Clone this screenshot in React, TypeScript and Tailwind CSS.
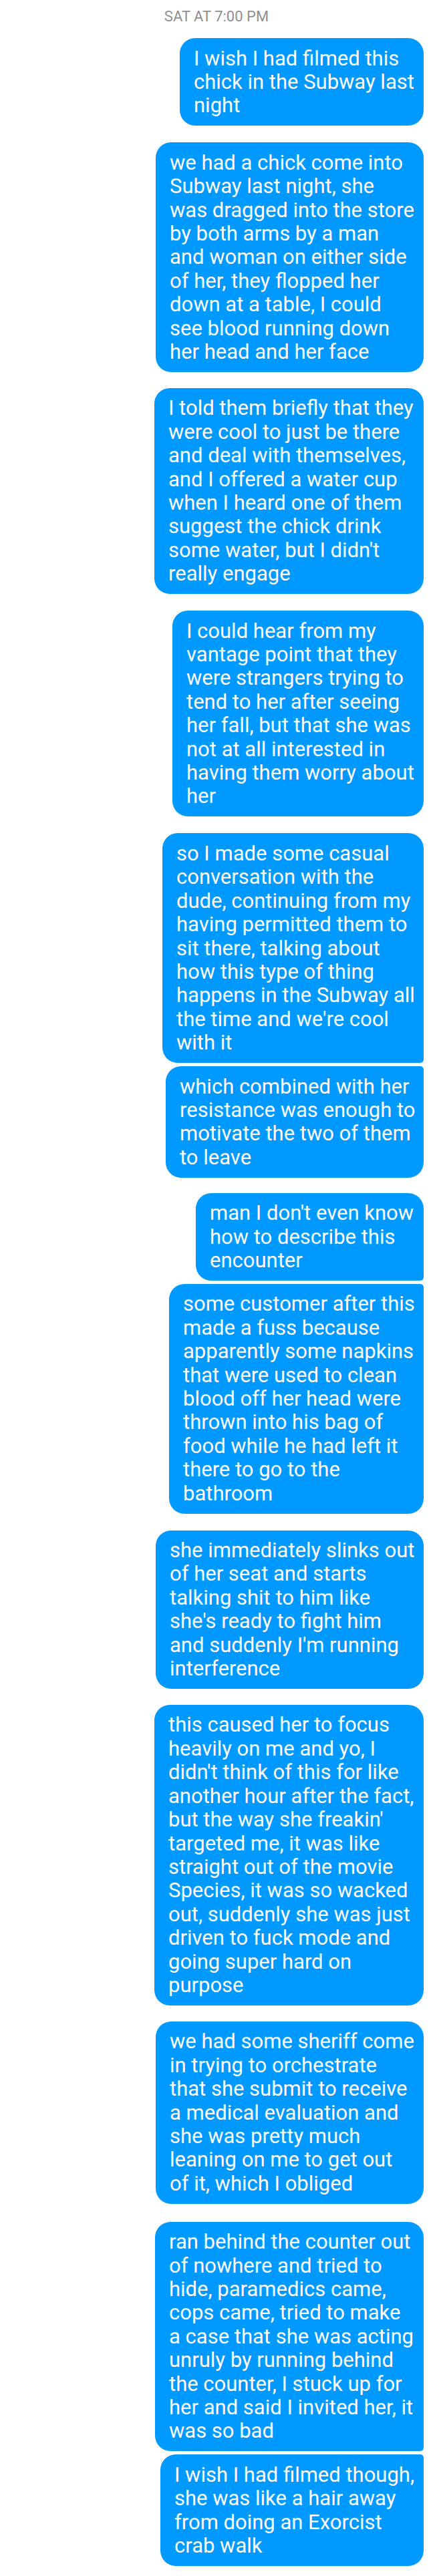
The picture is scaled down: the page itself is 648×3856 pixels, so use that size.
type Bubble = {
  lines: string[]
  width: number
  gap: number
  joinTop?: boolean
  joinBottom?: boolean
}

const bubbles: Bubble[] = [
  { width: 365, gap: 19, lines: ['I wish I had filmed this', 'chick in the Subway last', 'night'] },
  {
    width: 401,
    gap: 25,
    lines: [
      'we had a chick come into',
      'Subway last night, she',
      'was dragged into the store',
      'by both arms by a man',
      'and woman on either side',
      'of her, they flopped her',
      'down at a table, I could',
      'see blood running down',
      'her head and her face',
    ],
  },
  {
    width: 403,
    gap: 24,
    lines: [
      'I told them briefly that they',
      'were cool to just be there',
      'and deal with themselves,',
      'and I offered a water cup',
      'when I heard one of them',
      'suggest the chick drink',
      "some water, but I didn't",
      'really engage',
    ],
  },
  {
    width: 376,
    gap: 25,
    lines: [
      'I could hear from my',
      'vantage point that they',
      'were strangers trying to',
      'tend to her after seeing',
      'her fall, but that she was',
      'not at all interested in',
      'having them worry about',
      'her',
    ],
  },
  {
    width: 391,
    gap: 25,
    joinBottom: true,
    lines: [
      'so I made some casual',
      'conversation with the',
      'dude, continuing from my',
      'having permitted them to',
      'sit there, talking about',
      'how this type of thing',
      'happens in the Subway all',
      "the time and we're cool",
      'with it',
    ],
  },
  {
    width: 386,
    gap: 5,
    joinTop: true,
    lines: ['which combined with her', 'resistance was enough to', 'motivate the two of them', 'to leave'],
  },
  {
    width: 341,
    gap: 23,
    joinBottom: true,
    lines: ["man I don't even know", 'how to describe this', 'encounter'],
  },
  {
    width: 381,
    gap: 5,
    joinTop: true,
    lines: [
      'some customer after this',
      'made a fuss because',
      'apparently some napkins',
      'that were used to clean',
      'blood off her head were',
      'thrown into his bag of',
      'food while he had left it',
      'there to go to the',
      'bathroom',
    ],
  },
  {
    width: 401,
    gap: 25,
    lines: [
      'she immediately slinks out',
      'of her seat and starts',
      'talking shit to him like',
      "she's ready to fight him",
      "and suddenly I'm running",
      'interference',
    ],
  },
  {
    width: 403,
    gap: 24,
    lines: [
      'this caused her to focus',
      'heavily on me and yo, I',
      "didn't think of this for like",
      'another hour after the fact,',
      "but the way she freakin'",
      'targeted me, it was like',
      'straight out of the movie',
      'Species, it was so wacked',
      'out, suddenly she was just',
      'driven to fuck mode and',
      'going super hard on',
      'purpose',
    ],
  },
  {
    width: 401,
    gap: 24,
    lines: [
      'we had some sheriff come',
      'in trying to orchestrate',
      'that she submit to receive',
      'a medical evaluation and',
      'she was pretty much',
      'leaning on me to get out',
      'of it, which I obliged',
    ],
  },
  {
    width: 402,
    gap: 27,
    joinBottom: true,
    lines: [
      'ran behind the counter out',
      'of nowhere and tried to',
      'hide, paramedics came,',
      'cops came, tried to make',
      'a case that she was acting',
      'unruly by running behind',
      'the counter, I stuck up for',
      'her and said I invited her, it',
      'was so bad',
    ],
  },
  {
    width: 394,
    gap: 5,
    joinTop: true,
    lines: ['I wish I had filmed though,', 'she was like a hair away', 'from doing an Exorcist', 'crab walk'],
  },
]

const App = () => {
  return (
    <div className="min-h-[3856px] bg-white font-['Roboto',sans-serif] pr-[14px] flex flex-col items-end">
      <div className="self-stretch pt-[12px] pl-[14px] text-center text-[22px] leading-[26px] text-[#8f8f8f]">
        SAT AT 7:00 PM
      </div>
      {bubbles.map((b, i) => (
        <div
          key={i}
          style={{ width: b.width, marginTop: b.gap }}
          className={`bg-[#0099ff] text-white text-[31px] leading-[35.4px] pl-[21px] pr-[18px] py-[12.5px] rounded-[23px] ${
            b.joinTop ? 'rounded-tr-[5px]' : ''
          } ${b.joinBottom ? 'rounded-br-[5px]' : ''}`}
        >
          {b.lines.map((line, j) => (
            <div key={j} className="whitespace-nowrap">
              {line}
            </div>
          ))}
        </div>
      ))}
    </div>
  )
}

export default App
